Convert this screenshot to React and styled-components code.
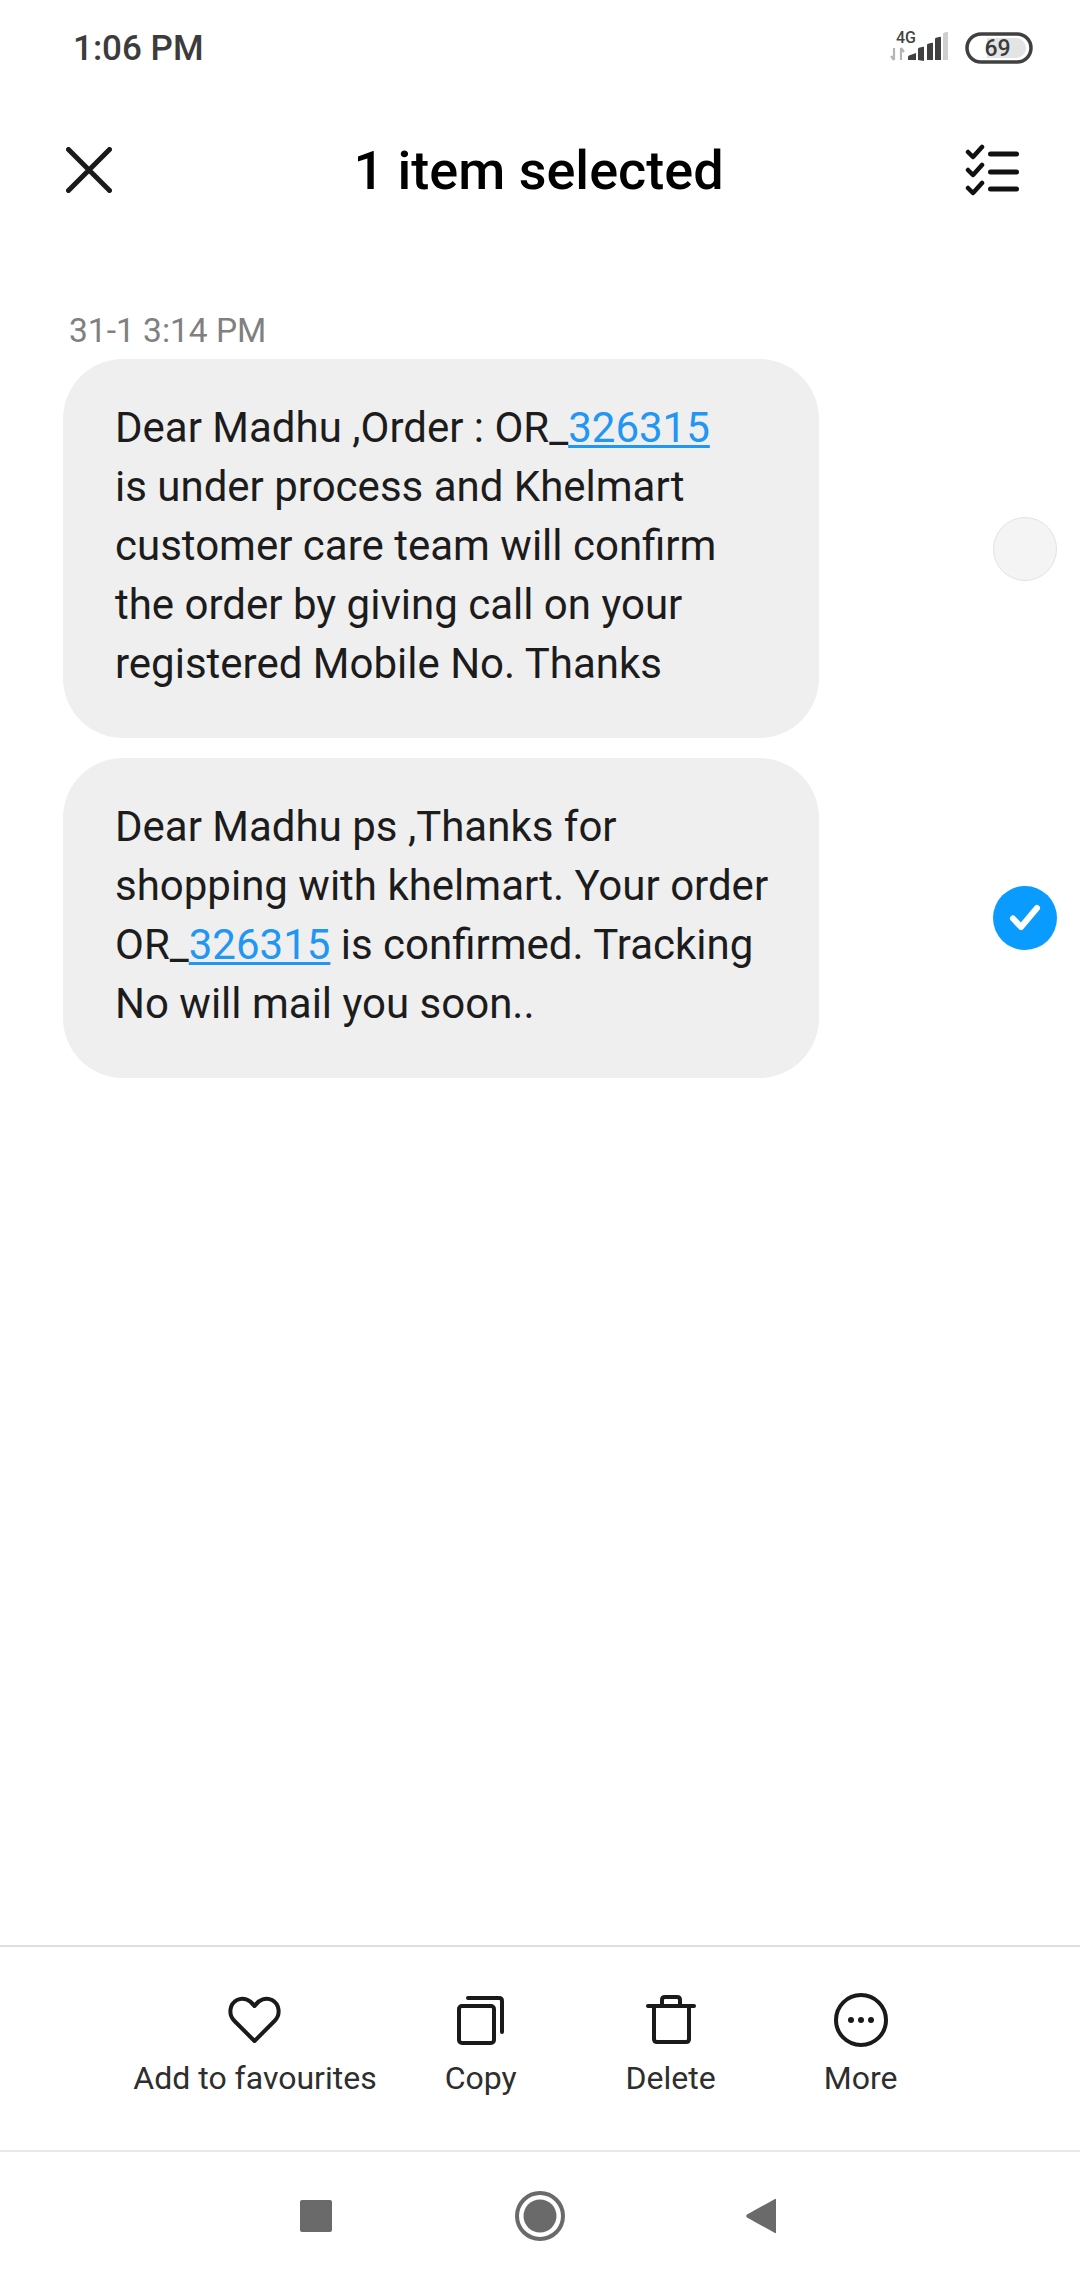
import React from "react";
import styled, { createGlobalStyle } from "styled-components";

const Global = createGlobalStyle`
  html, body { margin: 0; padding: 0; background: #fff; }
  * { box-sizing: border-box; }
`;

const Page = styled.div`
  width: 1080px;
  height: 2280px;
  display: flex;
  flex-direction: column;
  background: #fff;
  font-family: Roboto, "Liberation Sans", sans-serif;
  overflow: hidden;
`;

const StatusBar = styled.div`
  height: 96px;
  display: flex;
  align-items: center;
  justify-content: space-between;
  padding: 0 47px 0 73px;
`;

const Time = styled.span`
  font-size: 35px;
  font-weight: 500;
  color: #3c3c3c;
`;

const StatusIcons = styled.div`
  display: flex;
  align-items: center;
`;

const Toolbar = styled.div`
  height: 148px;
  display: flex;
  align-items: center;
  justify-content: space-between;
  padding: 0 60px 0 66px;
`;

const Title = styled.h1`
  margin: 0;
  font-size: 54px;
  font-weight: 500;
  color: #000;
`;

const Messages = styled.div`
  flex: 1;
  display: flex;
  flex-direction: column;
  padding-top: 67px;
`;

const Stamp = styled.div`
  margin-left: 69px;
  font-size: 33.500px;
  line-height: 40px;
  color: #808080;
  margin-bottom: 8px;
`;

const Row = styled.div`
  display: flex;
  align-items: center;
  justify-content: space-between;
  padding: 0 23px 0 63px;
  margin-bottom: 20px;
`;

const Bubble = styled.div`
  width: 756px;
  padding: 39px 0 45px 52px;
  background: #efefef;
  border-radius: 60px;
  font-size: 42px;
  line-height: 59px;
  color: #1c1c1c;
  white-space: nowrap;
`;

const Link = styled.span`
  color: #2196f3;
  text-decoration: underline;
  text-decoration-thickness: 3px;
  text-underline-offset: 3px;
`;

const Radio = styled.div`
  width: 64px;
  height: 64px;
  border-radius: 50%;
  display: flex;
  align-items: center;
  justify-content: center;
  background: ${(p) => (p.$checked ? "#0a9bff" : "#f4f4f4")};
  border: ${(p) => (p.$checked ? "none" : "1px solid #e2e2e2")};
`;

const ActionBar = styled.div`
  height: 205px;
  display: flex;
  justify-content: center;
  border-top: 2px solid #dedede;
  padding-top: 44px;
`;

const Action = styled.div`
  min-width: 190px;
  padding: 0 9px;
  display: flex;
  flex-direction: column;
  align-items: center;
`;

const ActionIcon = styled.div`
  height: 58px;
  display: flex;
  align-items: center;
  justify-content: center;
  margin-bottom: 9px;
`;

const ActionLabel = styled.span`
  font-size: 32px;
  line-height: 40px;
  color: #2e2e2e;
  white-space: nowrap;
`;

const NavBar = styled.div`
  flex: none;
  height: 130px;
  display: flex;
  align-items: center;
  justify-content: center;
  border-top: 2px solid #e8e8e8;
`;

const NavSlot = styled.div`
  width: 224px;
  display: flex;
  justify-content: center;
  padding-right: ${(p) => p.$inset || 0}px;
`;

const Signal = () => (
  <svg width="62" height="40" viewBox="0 -2 62 40">
    <text x="7" y="13" fontFamily="Roboto, sans-serif" fontWeight="500" fontSize="16" fill="#444">4G</text>
    <path d="M5 18v12M5 30l-3-4M12 30V18M12 18l3 4" stroke="#b5b5b5" strokeWidth="2.200" fill="none" />
    <path d="M19 30v-3q0-1 1-1.500l7-2.500v7z" fill="#404040" />
    <path d="M29 30V19q0-1 1-1.200l4-1q1-.3 1 .7v13.500z" fill="#404040" />
    <path d="M38 30V15q0-1 1-1.200l4-1q1-.3 1 .7v16.500z" fill="#404040" />
    <path d="M46 30V9q0-1 1-1.200l4-1q1-.3 1 .7v22.500z" fill="#404040" />
    <path d="M54 30V4q0-1 1-1.200l3-1q1-.3 1 .7v27.500z" fill="#cfcfcf" />
  </svg>
);

const Battery = () => (
  <svg width="68" height="32" viewBox="0 0 68 32" style={{ marginLeft: 14 }}>
    <rect x="2" y="2" width="64" height="28" rx="14" fill="#fff" stroke="#404040" strokeWidth="3.500" />
    <path d="M22 6h29a10 10 0 0 1 0 20H22z" fill="#e4e4e4" />
    <text x="32.500" y="24" textAnchor="middle" fontFamily="Roboto, sans-serif" fontWeight="500" fontSize="23" fill="#3c3c3c">69</text>
  </svg>
);

const Close = () => (
  <svg width="46" height="46" viewBox="0 0 46 46">
    <path d="M2.500 2.500L43.500 43.500M43.500 2.500L2.500 43.500" stroke="#1a1a1a" strokeWidth="5" strokeLinecap="round" />
  </svg>
);

const Checklist = () => (
  <svg width="55" height="52" viewBox="0 0 55 52">
    <g fill="none" stroke="#111" strokeLinecap="round" strokeLinejoin="round">
      <path d="M3 8l5 5 9-10M3 26l5 5 9-10M3 44l5 5 9-10" strokeWidth="4.500" />
      <path d="M25.500 10h26M25.500 28h26M25.500 45h26" strokeWidth="5" />
    </g>
  </svg>
);

const Heart = () => (
  <svg width="54" height="48" viewBox="0 0 54 48">
    <path d="M26.500 45L6.500 25C0 18.500 1.500 8 9 4C15 1 22 3.500 26.500 10C31 3.500 38 1 44 4C51.500 8 53 18.500 46.500 25Z" fill="none" stroke="#1a1a1a" strokeWidth="4" strokeLinejoin="round" />
  </svg>
);

const Copy = () => (
  <svg width="48" height="49" viewBox="0 0 48 49">
    <rect x="2" y="10" width="35" height="37" rx="3" fill="none" stroke="#1a1a1a" strokeWidth="4" />
    <path d="M11 2h31q3 0 3 3v31" fill="none" stroke="#1a1a1a" strokeWidth="4" strokeLinecap="round" />
  </svg>
);

const Trash = () => (
  <svg width="50" height="50" viewBox="0 0 50 50">
    <path d="M2 11h46" stroke="#1a1a1a" strokeWidth="4" strokeLinecap="round" />
    <path d="M8 11v33q0 3 3 3h29q3 0 3-3V11M16 11V5q0-3 3-3h12q3 0 3 3v6" fill="none" stroke="#1a1a1a" strokeWidth="4" />
  </svg>
);

const More = () => (
  <svg width="54" height="54" viewBox="0 0 54 54">
    <circle cx="27" cy="27" r="25" fill="none" stroke="#1a1a1a" strokeWidth="4" />
    <circle cx="17" cy="27" r="3" fill="#1a1a1a" />
    <circle cx="27" cy="27" r="3" fill="#1a1a1a" />
    <circle cx="37" cy="27" r="3" fill="#1a1a1a" />
  </svg>
);

const Tick = () => (
  <svg width="32" height="28" viewBox="0 0 32 28">
    <path d="M4 14.500L12 23L28 4" fill="none" stroke="#fff" strokeWidth="6" strokeLinecap="round" strokeLinejoin="round" />
  </svg>
);

const actions = [
  ["Add to favourites", <Heart key="h" />],
  ["Copy", <Copy key="c" />],
  ["Delete", <Trash key="t" />],
  ["More", <More key="m" />],
];

export default function App() {
  return (
    <Page>
      <Global />
      <StatusBar>
        <Time>1:06 PM</Time>
        <StatusIcons>
          <Signal />
          <Battery />
        </StatusIcons>
      </StatusBar>
      <Toolbar>
        <Close />
        <Title>1 item selected</Title>
        <Checklist />
      </Toolbar>
      <Messages>
        <Stamp>31-1 3:14 PM</Stamp>
        <Row>
          <Bubble>
            Dear Madhu ,Order : OR_<Link>326315</Link>
            <br />
            is under process and Khelmart
            <br />
            customer care team will confirm
            <br />
            the order by giving call on your
            <br />
            registered Mobile No. Thanks
          </Bubble>
          <Radio />
        </Row>
        <Row>
          <Bubble>
            Dear Madhu ps ,Thanks for
            <br />
            shopping with khelmart. Your order
            <br />
            OR_<Link>326315</Link> is confirmed. Tracking
            <br />
            No will mail you soon..
          </Bubble>
          <Radio $checked>
            <Tick />
          </Radio>
        </Row>
      </Messages>
      <ActionBar>
        {actions.map(([label, icon]) => (
          <Action key={label}>
            <ActionIcon>{icon}</ActionIcon>
            <ActionLabel>{label}</ActionLabel>
          </Action>
        ))}
      </ActionBar>
      <NavBar>
        <NavSlot>
          <svg width="34" height="34" viewBox="0 0 34 34"><rect x="1" y="1" width="32" height="32" rx="2" fill="#6a6a6a" /></svg>
        </NavSlot>
        <NavSlot>
          <svg width="50" height="50" viewBox="0 0 50 50">
            <circle cx="25" cy="25" r="23" fill="none" stroke="#6a6a6a" strokeWidth="4" />
            <circle cx="25" cy="25" r="16.500" fill="#6a6a6a" />
          </svg>
        </NavSlot>
        <NavSlot $inset={6}>
          <svg width="32" height="38" viewBox="0 0 32 38"><path d="M30 2q1-1 1 1v32q0 2-1 1L2 20.500q-1.500-1.500 0-3z" fill="#6a6a6a" /></svg>
        </NavSlot>
      </NavBar>
    </Page>
  );
}
